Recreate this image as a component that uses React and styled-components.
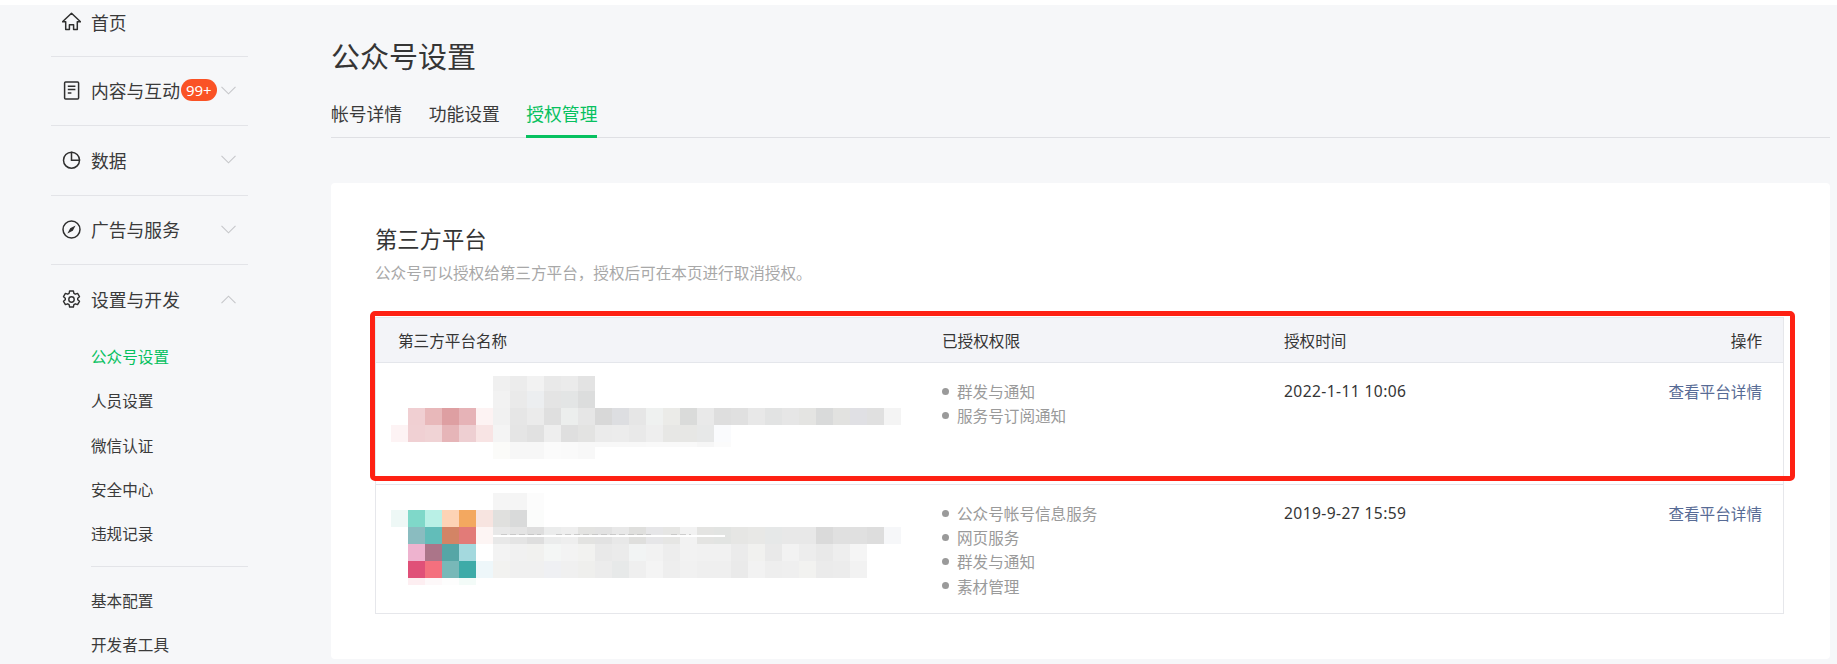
import React from 'react';
import styled, { createGlobalStyle } from 'styled-components';

const FONT = '"Noto Sans CJK SC", "Noto Sans", sans-serif';

const CELL = 17;

const MOSAIC_ONE = [
  { y: 13, h: 15, from: 6, colors: ['#f0f0f0', '#ececec', '#f2f2f2', '#e9e9e9', '#ebebeb', '#e3e3e3'] },
  { y: 28, h: 17, from: 6, colors: ['#f2f2f2', '#eaeaea', '#eceef0', '#e4e4e4', '#e3e5e5', '#dcdddd'] },
  {
    y: 45,
    h: 17,
    from: 1,
    colors: ['#f0cfd2', '#e8b8ba', '#de9fa2', '#e6b3b7', '#fdf3f3', '#f1f1f1', '#e6e6e6', '#ebebeb', '#dfdfdf', '#eceeed', '#e6e6e6', '#d8d8d8', '#dddee1', '#e6e6e6', '#eff1f0', '#ebebe8', '#dadbda', '#e9e9e9', '#dedede', '#e0e0e0', '#e8e8e8', '#e2e3e3', '#e6e6e6', '#e4e4e2', '#d9dada', '#e2e2e0', '#e0e0e4', '#e0e0e0', '#f4f4f4'],
  },
  {
    y: 62,
    h: 17,
    from: 0,
    colors: ['#fdf3f4', '#f0d0d3', '#f0d3d5', '#e6b5b8', '#eecfd2', '#f8e4e4', '#f4f4f4', '#e5e5e5', '#e1e1e1', '#eeeeee', '#dfdfdf', '#e3e3e2', '#ebebeb', '#ececec', '#e9e9e9', '#eeeeee', '#e7e7e5', '#e7e7e5', '#e7e8e8', '#fafbfd'],
  },
  { y: 79, h: 17, from: 6, colors: ['#fbfbf9', '#f7f7f7', '#f7f7f7', '#fbfbfb', '#fafafa', '#f8f8f8'] },
  { y: 79, h: 5, from: 12, colors: ['#f8f8f8', '#f8f8f8', '#f8f8f8', '#f9f9f9', '#f9f9f9', '#f9f9f9', '#f6f6f6', '#fbfbfb'] },
];

const MOSAIC_TWO = [
  { y: 8, h: 17, from: 6, colors: ['#f5f5f5', '#f5f5f5', '#fcfcfc'] },
  { y: 25, h: 17, from: 0, colors: ['#eef8f6', '#7fd8c9', '#b9f0e6', '#fdd3b5', '#f3a860', '#f7e4e0', '#e0e0de', '#d9dada', '#fbfcfb'] },
  {
    y: 42,
    h: 17,
    from: 1,
    colors: ['#8abcc0', '#62bdb9', '#d38465', '#e27b78', '#fdf5f4', '#e8e8e8', '#e4e4e4', '#dedede', '#ebecec', '#eeeeee', '#e3e3e1', '#e2e2e2', '#e8e8e8', '#dfdfdd', '#e6e6e8', '#e6e6e4', '#f2f2f2', '#e4e4e2', '#e2e4e2', '#e6e6e4', '#e8e8e6', '#e6e8e8', '#e8e8e8', '#e8e8e8', '#dadada', '#e0e0e0', '#e0e0e0', '#dddddd', '#f6f7f9'],
  },
  {
    y: 59,
    h: 17,
    from: 1,
    colors: ['#eeb3cf', '#ab7589', '#56a6a6', '#a4d9de', '#ffffff', '#f3f3f3', '#f1f1f1', '#f1f1ef', '#f4f6f5', '#f3f3f3', '#f2f2f0', '#e9e9e9', '#ebebeb', '#f2f4f4', '#f2f2f2', '#ededed', '#f2f2f2', '#f1f1f1', '#f1f1f1', '#ebebeb', '#f1f1ef', '#e9e9e9', '#f2f2f2', '#ededed', '#e9e9e9', '#eeeeee', '#f5f5f5'],
  },
  {
    y: 76,
    h: 17,
    from: 1,
    colors: ['#e05078', '#f4707e', '#78b8b8', '#3eaba8', '#eef7fa', '#f2f2f0', '#f0f0f0', '#f0f0f0', '#eff0f3', '#f0f0f0', '#efefed', '#ececec', '#e7e9e9', '#efefef', '#f4f4f4', '#eeeeee', '#f1f1f1', '#efefef', '#efefef', '#eaeaea', '#f2f2f2', '#eeeeee', '#efefef', '#f2f2f0', '#ebebeb', '#ececec', '#f2f2f2'],
  },
  { y: 93, h: 7, from: 1, colors: ['#fdeef1', '#fdf8f9', '#fdfdfd', '#f3fbf8'] },
];

const PLATFORMS = [
  {
    mosaic: MOSAIC_ONE,
    height: 121,
    scopes: ['群发与通知', '服务号订阅通知'],
    time: '2022-1-11 10:06',
  },
  {
    mosaic: MOSAIC_TWO,
    height: 128,
    scopes: ['公众号帐号信息服务', '网页服务', '群发与通知', '素材管理'],
    time: '2019-9-27 15:59',
    smear: true,
  },
];

const SUB_MENU = ['人员设置', '微信认证', '安全中心', '违规记录'];

const GlobalStyle = createGlobalStyle`
  html, body {
    margin: 0;
    height: 100%;
    overflow: hidden;
    background: #fff;
    font-family: ${FONT};
  }
`;

const HomeIcon = () => (
  <svg width="19" height="19" viewBox="0 0 19 19" fill="none" stroke="#2f2f2f" strokeWidth="1.5" strokeLinejoin="round">
    <path d="M9.5 1.2.5 9.8h3.2v7.8h3.7v-4.9h4.2v4.9h3.7V9.8h3.2z" />
  </svg>
);

const DocIcon = () => (
  <svg width="19" height="19" viewBox="0 0 19 19" fill="none" stroke="#2f2f2f" strokeWidth="1.5">
    <rect x="2.6" y="1" width="14" height="17" rx="1" />
    <path d="M5.8 5.2h7.6M5.8 8.6h7.6M5.8 12h3.6" />
  </svg>
);

const PieIcon = () => (
  <svg width="19" height="19" viewBox="0 0 19 19" fill="none" stroke="#2f2f2f" strokeWidth="1.5">
    <path d="M9.5 2.2a8 8 0 1 0 8 8h-8z" />
    <path d="M9.5 2.2a8 8 0 0 1 8 8" />
  </svg>
);

const CompassIcon = () => (
  <svg width="19" height="19" viewBox="0 0 19 19" fill="none" stroke="#2f2f2f" strokeWidth="1.5">
    <circle cx="9.5" cy="9.5" r="8.5" />
    <path d="M13.6 5.4 10.8 10.8 5.4 13.6 8.2 8.2z" fill="#2f2f2f" stroke="none" />
  </svg>
);

const GearIcon = () => (
  <svg width="19" height="19" viewBox="0 0 19 19" fill="none" stroke="#2f2f2f" strokeWidth="1.4" strokeLinejoin="round">
    <path d="M7.6 1h3.8l.5 2.4 1.4.8 2.3-.8 1.9 3.3-1.8 1.6v1.4l1.8 1.6-1.9 3.3-2.3-.8-1.4.8-.5 2.4H7.6l-.5-2.4-1.4-.8-2.3.8-1.9-3.3 1.8-1.6V8.3L1.5 6.7l1.9-3.3 2.3.8 1.4-.8z" />
    <circle cx="9.5" cy="9.5" r="2.7" />
  </svg>
);

const ChevronIcon = ({ up }) => (
  <svg width="15" height="9" viewBox="0 0 15 9" fill="none" stroke="#c6c7ca" strokeWidth="1.1">
    <path d={up ? 'M.5 8.2 7.5 1.2l7 7' : 'M.5.8l7 7 7-7'} />
  </svg>
);

const Page = styled.div`
  display: flex;
  flex-direction: column;
  width: 1837px;
  height: 664px;
  overflow: hidden;
  color: #353535;
`;

const TopStrip = styled.div`
  flex: none;
  height: 5px;
  background: #fff;
`;

const Body = styled.div`
  flex: 1;
  display: flex;
  min-height: 0;
  background: #f6f7f9;
`;

const Sidebar = styled.nav`
  flex: none;
  width: 331px;
  box-sizing: border-box;
  padding-left: 51px;
`;

const SideColumn = styled.div`
  width: 197px;
`;

const MenuRow = styled.div`
  box-sizing: border-box;
  display: flex;
  align-items: center;
  height: ${(p) => p.$height}px;
  padding: 0 12px ${(p) => p.$bottom || 2}px 11px;
  border-bottom: ${(p) => (p.$plain ? 'none' : '1px solid #e3e4e8')};
  font-size: 17.8px;
  color: #3a3a3a;
`;

const MenuIcon = styled.span`
  flex: none;
  display: flex;
  width: 19px;
  margin-right: 10px;
  svg {
    display: block;
  }
`;

const Badge = styled.span`
  flex: none;
  height: 22px;
  line-height: 22px;
  padding: 0 5px;
  margin-left: 1px;
  border-radius: 11px;
  background: #fa5225;
  color: #fff;
  font-size: 15px;
  font-family: "Noto Sans", sans-serif;
`;

const Chevron = styled.span`
  margin-left: auto;
  display: flex;
`;

const SubMenu = styled.div`
  padding-left: 40px;
`;

const SubItem = styled.div`
  height: 44.3px;
  line-height: 42.3px;
  font-size: 15.6px;
  color: ${(p) => (p.$active ? '#07c160' : '#3a3a3a')};
`;

const SubDivider = styled.div`
  height: 1px;
  margin: 9.5px 0 12px;
  background: #e3e4e8;
`;

const Main = styled.main`
  flex: 1;
  min-width: 0;
  padding-right: 7px;
`;

const Title = styled.h1`
  margin: 0;
  padding-top: 30px;
  height: 40px;
  line-height: 40px;
  font-size: 29px;
  font-weight: 400;
  color: #353535;
`;

const Tabs = styled.div`
  display: flex;
  gap: 26.5px;
  height: 63px;
  box-sizing: border-box;
  padding-top: 24px;
  border-bottom: 1px solid #dfe0e4;
`;

const Tab = styled.div`
  height: 36px;
  line-height: 28px;
  font-size: 17.8px;
  color: ${(p) => (p.$active ? '#07c160' : '#3a3a3a')};
  border-bottom: ${(p) => (p.$active ? '3px solid #07c160' : 'none')};
`;

const Card = styled.section`
  box-sizing: border-box;
  height: 476px;
  margin-top: 45px;
  padding: 41px 46px 0 44px;
  background: #fff;
  border-radius: 4px;
`;

const CardTitle = styled.h2`
  margin: 0;
  height: 28px;
  line-height: 28px;
  font-size: 22.3px;
  font-weight: 400;
  color: #353535;
`;

const CardHint = styled.p`
  margin: 8px 0 0;
  height: 24px;
  line-height: 24px;
  font-size: 15.6px;
  color: #a8a8a8;
`;

const TableWrap = styled.div`
  position: relative;
  margin-top: 33px;
`;

const Highlight = styled.div`
  position: absolute;
  left: -5px;
  right: -11px;
  top: -6px;
  height: 170px;
  box-sizing: border-box;
  border: 5px solid #fe2113;
  border-radius: 5px;
  pointer-events: none;
`;

const Table = styled.div`
  border: 1px solid #e6e7eb;
`;

const columns = `
  display: grid;
  grid-template-columns: 566px 342px 1fr 240px;
`;

const HeadRow = styled.div`
  ${columns}
  height: 44px;
  line-height: 44px;
  background: #f3f4f8;
  border-bottom: 1px solid #e4e6eb;
  font-size: 15.6px;
  color: #353535;
`;

const HeadCell = styled.div`
  padding-left: ${(p) => (p.$first ? 22 : 0)}px;
  padding-right: ${(p) => (p.$right ? 21 : 0)}px;
  text-align: ${(p) => (p.$right ? 'right' : 'left')};
`;

const Row = styled.div`
  ${columns}
  height: ${(p) => p.$height}px;
  font-size: 15.6px;
  & + & {
    border-top: 1px solid #e4e6eb;
  }
`;

const NameCell = styled.div`
  padding-left: 14.7px;
  min-width: 0;
`;

const Mosaic = styled.svg`
  display: block;
  shape-rendering: crispEdges;
`;

const ScopeList = styled.ul`
  margin: 0;
  padding: 16px 0 0;
  list-style: none;
`;

const Scope = styled.li`
  display: flex;
  align-items: center;
  height: 24.2px;
  color: #9a9a9a;
  &::before {
    content: '';
    width: 7px;
    height: 7px;
    margin-right: 8px;
    border-radius: 50%;
    background: #9a9a9a;
  }
`;

const TimeCell = styled.div`
  padding-top: 16px;
  line-height: 24px;
  color: #353535;
  font-family: "Noto Sans", "Noto Sans CJK SC", sans-serif;
  letter-spacing: 0.4px;
`;

const ActionCell = styled.div`
  padding: 16px 21px 0 0;
  line-height: 24px;
  text-align: right;
`;

const DetailLink = styled.a`
  color: #576b95;
  text-decoration: none;
`;

const PlatformMosaic = ({ rows, smear }) => (
  <Mosaic width="515" height="110" viewBox="0 0 515 110">
    {rows.map((row) =>
      row.colors.map((color, i) => (
        <rect
          key={`${row.y}-${row.from + i}`}
          x={(row.from + i) * CELL}
          y={row.y}
          width={CELL}
          height={row.h}
          fill={color}
        />
      ))
    )}
    {smear && <rect x={102} y={50} width={232} height={1.5} fill="#fff" />}
    {smear && <path d="M110 49.5h40M165 49.5h95M280 49.5h20" stroke="#b5b5b5" strokeWidth="0.6" strokeDasharray="6 3" />}
  </Mosaic>
);

export default function App() {
  return (
    <>
      <GlobalStyle />
      <Page>
        <TopStrip />
        <Body>
          <Sidebar>
            <SideColumn>
              <MenuRow $height={52} $bottom={18}>
                <MenuIcon><HomeIcon /></MenuIcon>
                首页
              </MenuRow>
              <MenuRow $height={69}>
                <MenuIcon><DocIcon /></MenuIcon>
                内容与互动
                <Badge>99+</Badge>
                <Chevron><ChevronIcon /></Chevron>
              </MenuRow>
              <MenuRow $height={70}>
                <MenuIcon><PieIcon /></MenuIcon>
                数据
                <Chevron><ChevronIcon /></Chevron>
              </MenuRow>
              <MenuRow $height={69}>
                <MenuIcon><CompassIcon /></MenuIcon>
                广告与服务
                <Chevron><ChevronIcon /></Chevron>
              </MenuRow>
              <MenuRow $height={70} $plain>
                <MenuIcon><GearIcon /></MenuIcon>
                设置与开发
                <Chevron><ChevronIcon up /></Chevron>
              </MenuRow>
              <SubMenu>
                <SubItem $active>公众号设置</SubItem>
                {SUB_MENU.map((name) => (
                  <SubItem key={name}>{name}</SubItem>
                ))}
                <SubDivider />
                <SubItem>基本配置</SubItem>
                <SubItem>开发者工具</SubItem>
              </SubMenu>
            </SideColumn>
          </Sidebar>
          <Main>
            <Title>公众号设置</Title>
            <Tabs>
              <Tab>帐号详情</Tab>
              <Tab>功能设置</Tab>
              <Tab $active>授权管理</Tab>
            </Tabs>
            <Card>
              <CardTitle>第三方平台</CardTitle>
              <CardHint>公众号可以授权给第三方平台，授权后可在本页进行取消授权。</CardHint>
              <TableWrap>
                <Table>
                  <HeadRow>
                    <HeadCell $first>第三方平台名称</HeadCell>
                    <HeadCell>已授权权限</HeadCell>
                    <HeadCell>授权时间</HeadCell>
                    <HeadCell $right>操作</HeadCell>
                  </HeadRow>
                  {PLATFORMS.map((item) => (
                    <Row key={item.time} $height={item.height}>
                      <NameCell>
                        <PlatformMosaic rows={item.mosaic} smear={item.smear} />
                      </NameCell>
                      <ScopeList>
                        {item.scopes.map((scope) => (
                          <Scope key={scope}>{scope}</Scope>
                        ))}
                      </ScopeList>
                      <TimeCell>{item.time}</TimeCell>
                      <ActionCell>
                        <DetailLink href="#">查看平台详情</DetailLink>
                      </ActionCell>
                    </Row>
                  ))}
                </Table>
                <Highlight />
              </TableWrap>
            </Card>
          </Main>
        </Body>
      </Page>
    </>
  );
}
